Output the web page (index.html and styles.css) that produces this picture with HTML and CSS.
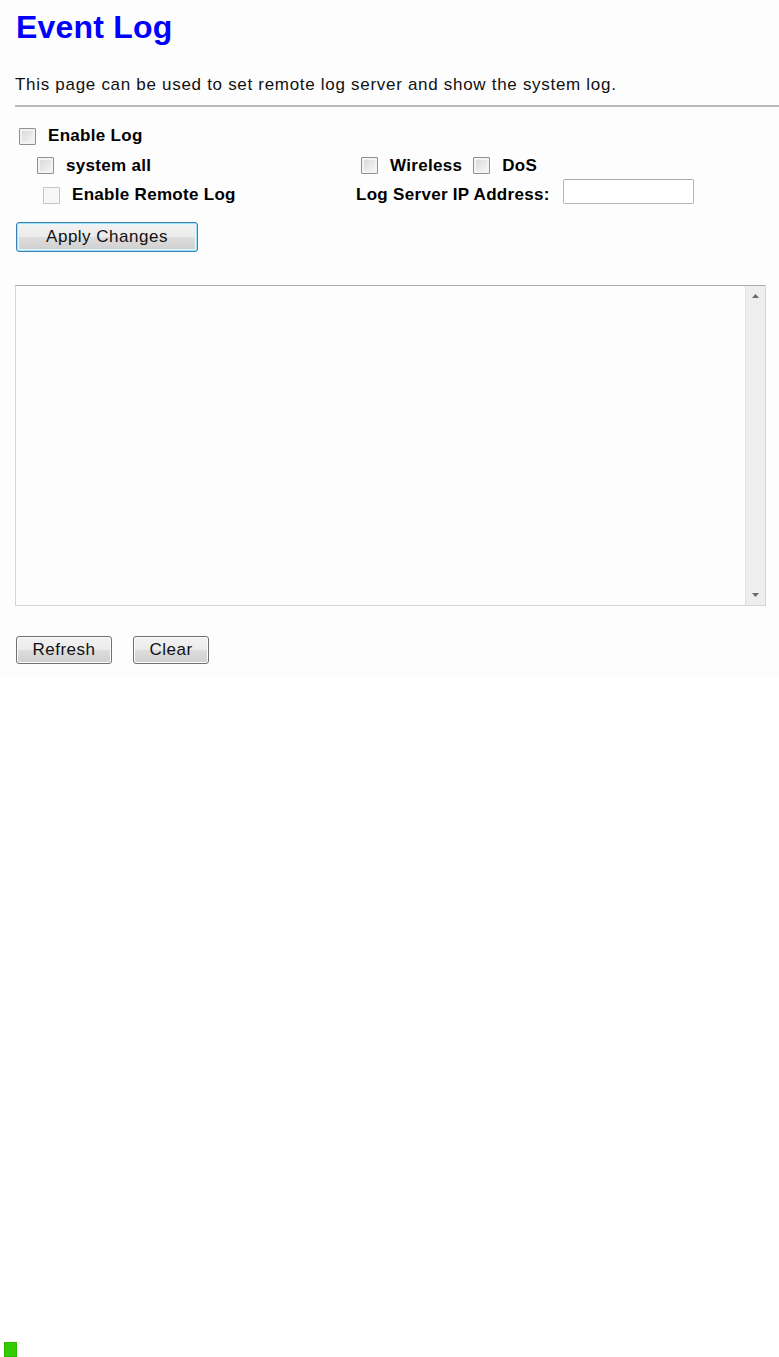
FILE: index.html
```html
<html>
<head>
<meta charset="UTF-8">
<title>Event Log</title>
<link rel="stylesheet" href="styles.css">
</head>
<body>

<div class="page">

<h1 class="title">Event Log</h1>
<p class="intro">This page can be used to set remote log server and show the system log.</p>
<hr class="line">

<form class="opts">
    <!-- enable -->
    <div class="row row1">
        <label class="item"><input type="checkbox" class="cb"><span>Enable Log</span></label>
    </div>

    <!-- types -->
    <div class="row row2">
        <div class="col1">
            <label class="item"><input type="checkbox" class="cb"><span>system all</span></label>
        </div>
        <div class="col2 types">
            <label class="item"><input type="checkbox" class="cb"><span>Wireless</span></label>
            <label class="item"><input type="checkbox" class="cb"><span>DoS</span></label>
        </div>
    </div>

    <!-- remote -->
    <div class="row row3">
        <div class="col1">
            <label class="item"><input type="checkbox" class="cb cb-off"><span>Enable Remote Log</span></label>
        </div>
        <div class="col2 remote">
            <span class="lbl">Log Server IP Address:</span>
            <input type="text" class="ip">
        </div>
    </div>

    <div class="apply">
        <button type="button" class="btn btn-focus">Apply Changes</button>
    </div>
</form>

<div class="logbox">
    <textarea class="log" readonly></textarea>
    <div class="sbar">
        <svg width="17" height="17" viewBox="0 0 17 17"><path d="M5 10 L8.5 6 L12 10 Z" fill="#6a6a6a"/></svg>
        <svg width="17" height="17" viewBox="0 0 17 17"><path d="M5 7 L12 7 L8.5 11 Z" fill="#6a6a6a"/></svg>
    </div>
</div>

<div class="actions">
    <button type="button" class="btn btn-small">Refresh</button>
    <button type="button" class="btn btn-clear">Clear</button>
</div>

</div>

<div class="mark"></div>

</body>
</html>
```

FILE: styles.css
```css
body {
    margin: 0;
    background: #fff;
    font-family: "Liberation Sans", Arial, sans-serif;
    color: #000;
}

.page {
    height: 678px;
    padding-left: 15px;
    background: #fdfdfd;
    box-sizing: border-box;
    overflow: hidden;
}

.title {
    margin: 9px 0 0 1px;
    font-size: 32px;
    line-height: 37px;
    font-weight: bold;
    letter-spacing: 0.2px;
    color: #0000ff;
}

.intro {
    margin: 29px 0 0 0;
    font-size: 17px;
    line-height: 20px;
    letter-spacing: 0.7px;
    color: #111;
}

.line {
    margin: 10px 0 0 0;
    border: 0;
    border-top: 2px solid #b9b9b9;
    height: 0;
}

.opts {
    margin: 14px 0 0 0;
}

.row {
    display: flex;
    align-items: center;
}

.row1 { height: 30px; padding-left: 4px; }
.row2 { height: 29px; }
.row3 { height: 30px; }

.col1 {
    width: 341px;
    flex: none;
}

.row2 .col1 { padding-left: 22px; box-sizing: border-box; }
.row3 .col1 { padding-left: 28px; box-sizing: border-box; }

.col2 {
    display: flex;
    align-items: center;
}

.types { padding-left: 5px; gap: 11px; }
.remote { gap: 13px; }

.item {
    display: inline-flex;
    align-items: center;
    gap: 12px;
    font-size: 17px;
    font-weight: bold;
    letter-spacing: 0.3px;
}

.lbl {
    font-size: 17px;
    font-weight: bold;
    letter-spacing: 0.3px;
}

.cb {
    appearance: none;
    -webkit-appearance: none;
    margin: 0;
    width: 17px;
    height: 17px;
    border: 1px solid #8e8f8f;
    border-radius: 1px;
    background: linear-gradient(135deg, #d6d6d6, #f8f8f8);
    box-shadow: inset 0 0 0 2px #f3f3f3;
    box-sizing: border-box;
}

.cb-off {
    border-color: #c4c4c4;
    background: #f7f7f7;
    box-shadow: none;
}

.ip {
    width: 131px;
    height: 25px;
    margin: 0 0 7px 0;
    border: 1px solid #b6b6b6;
    border-top-color: #a9a9a9;
    border-radius: 2px;
    background: #fff;
    box-sizing: border-box;
}

.apply {
    margin-top: 12px;
}

.btn {
    margin: 0;
    padding: 0;
    height: 28px;
    font-family: "Liberation Sans", Arial, sans-serif;
    font-size: 17px;
    letter-spacing: 0.5px;
    color: #111;
    border: 1px solid #707070;
    border-radius: 3px;
    background: linear-gradient(#f2f2f2 0%, #ebebeb 50%, #dddddd 51%, #cfcfcf 100%);
    box-shadow: inset 0 0 0 1px #fcfcfc;
}

.btn-focus {
    width: 182px;
    height: 30px;
    margin-left: 1px;
    border-color: #3c7fb1;
    box-shadow: inset 0 0 0 1px #9ce2fd, inset 0 0 0 2px #e6f6fd;
}

.btn-small { width: 96px; }
.btn-clear { width: 76px; }

.logbox {
    display: flex;
    width: 751px;
    height: 321px;
    margin-top: 33px;
    border: 1px solid #d6d6d6;
    border-top-color: #ababab;
    background: #fdfdfd;
    box-sizing: border-box;
}

.log {
    flex: 1;
    margin: 0;
    border: 0;
    resize: none;
    background: #fdfdfd;
    outline: none;
}

.sbar {
    width: 19px;
    display: flex;
    flex-direction: column;
    justify-content: space-between;
    align-items: center;
    background: #eeeeee;
    border-left: 1px solid #e2e2e2;
    padding: 2px 0;
}

.actions {
    display: flex;
    gap: 21px;
    margin-top: 30px;
    padding-left: 1px;
}

.mark {
    width: 13px;
    height: 15px;
    margin: 664px 0 0 4px;
    background: #33cc00;
    box-shadow: inset 0 0 0 1px #2bb800;
}
```
